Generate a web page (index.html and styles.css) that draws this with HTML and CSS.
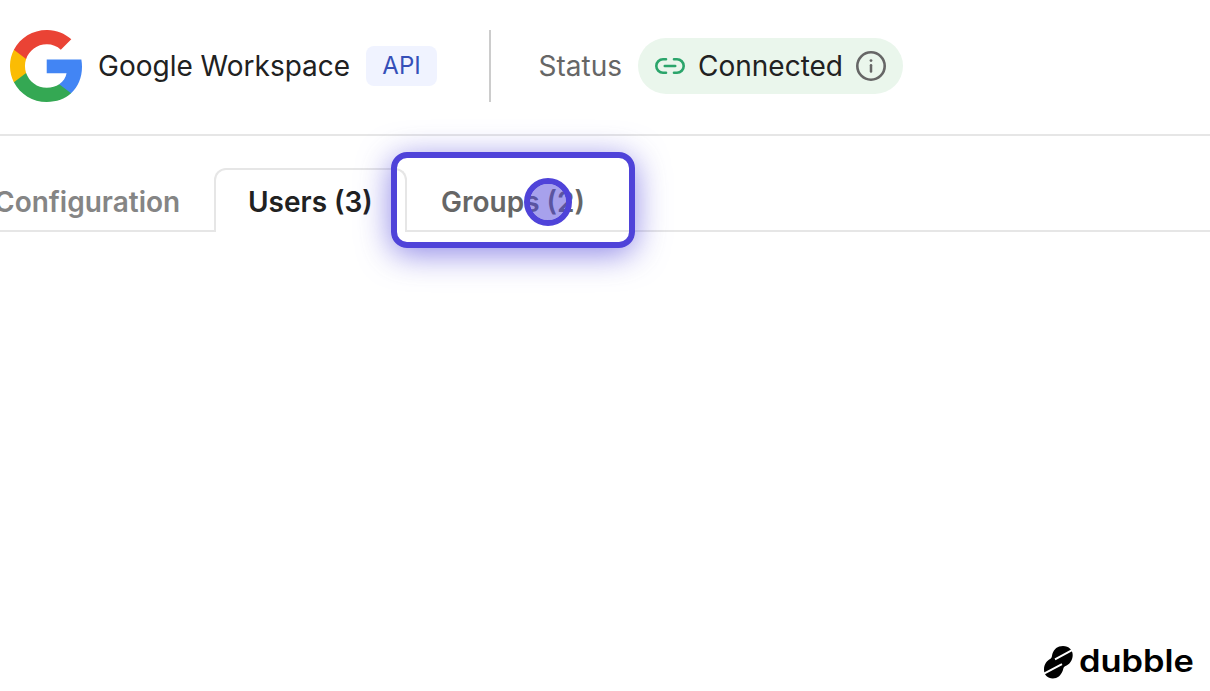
FILE: index.html
```html
<!DOCTYPE html>
<html lang="en">
<head>
<meta charset="utf-8">
<title>Google Workspace</title>
<link rel="stylesheet" href="styles.css">
</head>
<body>
<header class="header">
  <svg class="google" viewBox="0 0 533.5 544.3" preserveAspectRatio="none">
    <path fill="#4285f4" d="M533.5 278.4c0-18.5-1.5-37.1-4.7-55.3H272.1v104.8h147c-6.1 33.8-25.7 63.7-54.4 82.7v68h87.7c51.5-47.4 81.1-117.4 81.1-200.2z"/>
    <path fill="#34a853" d="M272.1 544.3c73.4 0 135.3-24.1 180.4-65.7l-87.7-68c-24.4 16.6-55.9 26-92.6 26-71 0-131.2-47.9-152.8-112.3H28.9v70.1c46.2 91.9 140.3 149.9 243.2 149.9z"/>
    <path fill="#fbbc04" d="M119.3 324.3c-11.4-33.8-11.4-70.4 0-104.2V150H28.9c-38.6 76.9-38.6 167.5 0 244.4l90.4-70.1z"/>
    <path fill="#ea4335" d="M272.1 107.7c38.8-.6 76.3 14 104.4 40.8l77.7-77.7C405 24.6 339.7-.8 272.1 0 169.2 0 75.1 58 28.9 150l90.4 70.1c21.5-64.5 81.8-112.4 152.8-112.4z"/>
  </svg>
  <span class="name">Google Workspace</span>
  <span class="badge">API</span>
  <span class="divider"></span>
  <span class="status-label">Status</span>
  <span class="status">
    <svg class="link" viewBox="0 0 30 16" fill="none" stroke="#2ba56b" stroke-width="2.6" stroke-linecap="round">
      <path d="M11 1.3H8A6.7 6.7 0 0 0 8 14.7H11M19 1.3H22A6.7 6.7 0 0 1 22 14.7H19M9.8 8H20.2"/>
    </svg>
    <span class="status-text">Connected</span>
    <svg class="info" viewBox="0 0 30 30" fill="none">
      <circle cx="15" cy="15" r="13.7" stroke="#666" stroke-width="2.6"/>
      <path d="M15 14.2V20.4" stroke="#666" stroke-width="2.5" stroke-linecap="round"/>
      <circle cx="15" cy="9.6" r="1.4" fill="#666"/>
    </svg>
  </span>
</header>
<nav class="tabs">
  <div class="tab config"><span>Configuration</span></div>
  <div class="tab active"><span>Users (3)</span></div>
  <div class="tab groups"><span>Groups (2)</span></div>
</nav>
<div class="highlight"></div>
<div class="pointer"></div>
<div class="brand">
  <svg class="brand-mark" viewBox="0 0 30 34">
    <path d="M9.500 8.500C11 4 14.500 1 20 1C26 1 29.700 5 29.700 10C29.700 15.500 26.500 19.500 22 21.300C20.500 22 20.500 23.500 19.800 25.500C18 30.500 14.500 33.500 9.800 33.500C4.500 33.500 1 30 1 24.500C1 19 4 15.500 7.500 13.700C9.200 12.600 8.800 10.500 9.500 8.500Z"/>
    <path d="M12 14.300L30 4.700M1 28.700L19 19.200" stroke="#fff" stroke-width="2"/>
  </svg>
  <svg class="brand-word" viewBox="0 0 116 34"><text x="0" y="27" textLength="115" lengthAdjust="spacingAndGlyphs">dubble</text></svg>
</div>
</body>
</html>
```
FILE: styles.css
```css
* { box-sizing: border-box; }
body {
  margin: 0;
  height: 691px;
  overflow: hidden;
  position: relative;
  background: #fff;
  font-family: Inter, sans-serif;
  font-size: 28px;
  color: #212121;
}
.header {
  display: flex;
  align-items: center;
  height: 136px;
  padding: 0 0 2px 10px;
  border-bottom: 2px solid #e6e6e6;
  white-space: nowrap;
}
.header > *, .status > * { flex-shrink: 0; }
.google { width: 72px; height: 72px; }
.name { width: 252px; margin-left: 16px; }
.badge {
  width: 71px;
  height: 40px;
  margin-left: 16px;
  border-radius: 8px;
  background: #f0f3ff;
  color: #354fb8;
  font-size: 24px;
  line-height: 40px;
  text-align: center;
}
.divider { width: 2px; height: 72px; margin-left: 52px; background: #ccc; }
.status-label { width: 83.5px; margin-left: 47.5px; color: #666; }
.status {
  display: flex;
  align-items: center;
  width: 265px;
  height: 56px;
  margin-left: 16px;
  padding-left: 17px;
  border-radius: 28px;
  background: #eaf6ec;
}
.link { width: 30px; height: 16px; }
.status-text { width: 145px; margin-left: 13px; }
.info { width: 30px; height: 30px; margin-left: 13px; }
.tabs {
  display: flex;
  height: 96px;
  padding-top: 32px;
  font-weight: 600;
  white-space: nowrap;
  color: #666;
}
.tab { height: 64px; line-height: 69px; border-bottom: 2px solid #e6e6e6; }
.config { width: 214px; color: #858585; }
.config span { margin-left: -6px; }
.active {
  width: 193px;
  padding-left: 32px;
  border: 2px solid #e6e6e6;
  border-bottom: 0;
  border-radius: 12px 12px 0 0;
  line-height: 65px;
  color: #212121;
}
.groups { flex: 1; padding-left: 34px; }
.highlight {
  position: absolute;
  left: 391px;
  top: 152px;
  width: 244px;
  height: 96px;
  border: 6px solid #4f43d9;
  border-radius: 16px;
  box-shadow: 0 6px 32px rgba(79, 67, 217, 0.64);
}
.pointer {
  position: absolute;
  left: 524px;
  top: 178px;
  width: 48px;
  height: 48px;
  border: 6px solid #4f43d9;
  border-radius: 50%;
  background: rgba(79, 67, 217, 0.5);
  background-clip: padding-box;
}
.brand {
  position: absolute;
  left: 1043px;
  top: 645px;
  display: flex;
  gap: 6px;
  align-items: center;
}
.brand-mark { width: 30px; height: 34px; }
.brand-word { width: 116px; height: 34px; overflow: visible; font: 600 31px Inter, sans-serif; }
```
